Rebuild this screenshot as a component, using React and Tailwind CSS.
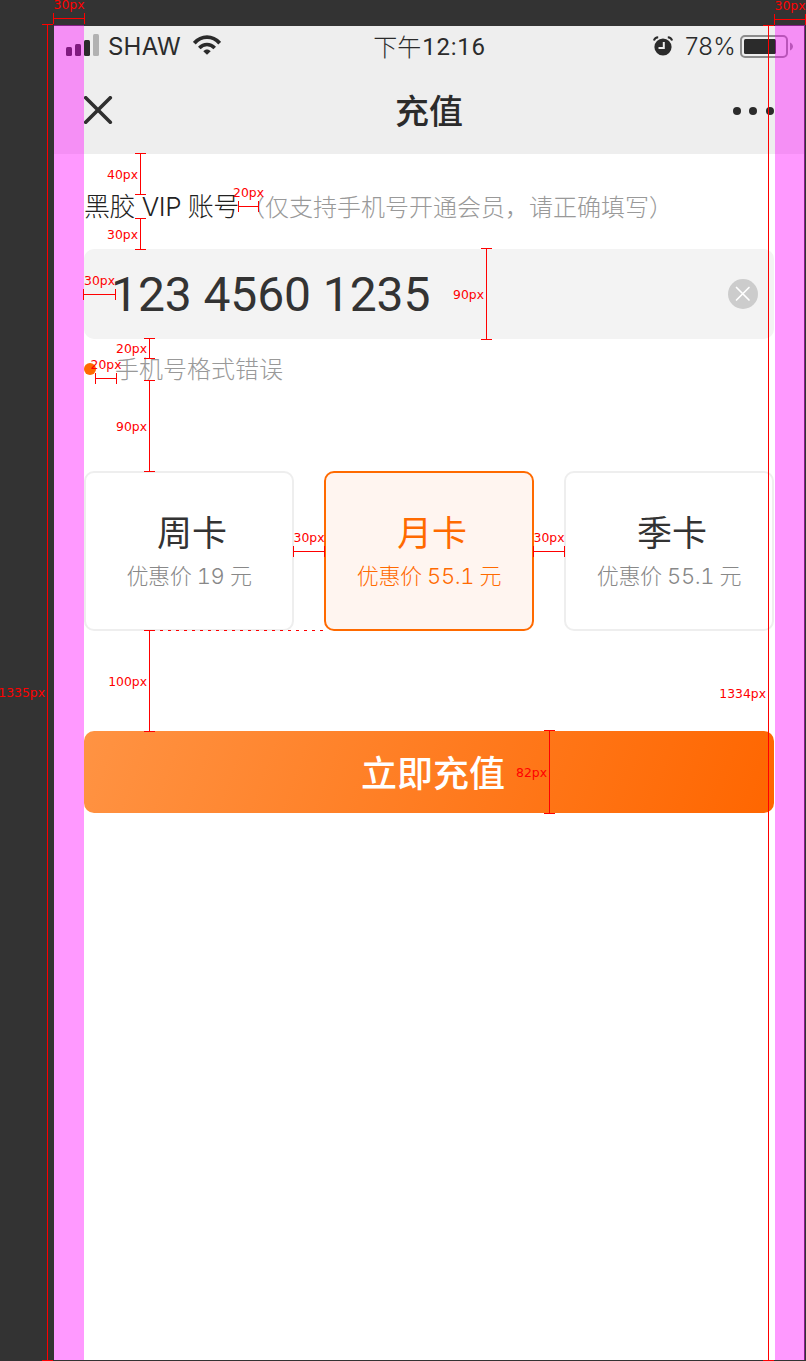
const CJK = "font-['Noto_Sans_CJK_SC',sans-serif]";
const MIXED = "font-['Inter','Noto_Sans_CJK_SC',sans-serif]";

const plans = [
  { name: '周卡', price: '优惠价 19 元' },
  { name: '月卡', price: '优惠价 55.1 元', selected: true },
  { name: '季卡', price: '优惠价 55.1 元' },
];

// Vertical measures run from y1 to y2 at x; horizontal ones from x1 to x2 at y.
const verticals = [
  { x: 47, y1: 24, y2: 1360, label: '1335px' },
  { x: 768, y1: 25, y2: 1360, label: '1334px' },
  { x: 140, y1: 153, y2: 194, label: '40px' },
  { x: 140, y1: 218, y2: 249, label: '30px' },
  { x: 149, y1: 338, y2: 358, label: '20px' },
  { x: 149, y1: 380, y2: 471, label: '90px' },
  { x: 486, y1: 248, y2: 339, label: '90px' },
  { x: 149, y1: 630, y2: 731, label: '100px' },
  { x: 549, y1: 730, y2: 813, label: '82px' },
];

const horizontals = [
  { y: 18, x1: 53, x2: 84, label: '30px' },
  { y: 19, x1: 774, x2: 805, label: '30px' },
  { y: 206, x1: 238, x2: 258, label: '20px' },
  { y: 294, x1: 83, x2: 115, label: '30px' },
  { y: 378, x1: 95, x2: 116, label: '20px' },
  { y: 551, x1: 293, x2: 324, label: '30px' },
  { y: 551, x1: 533, x2: 564, label: '30px' },
];

const LABEL =
  "absolute whitespace-nowrap font-['DejaVu_Sans',sans-serif] text-[12.4px] leading-[14px] text-[#ff0000]";

function VerticalMeasure({ x, y1, y2, label }) {
  return (
    <div
      className="absolute flex w-[11px] flex-col items-center border-y border-[#ff0000]"
      style={{ left: x - 5, top: y1, height: y2 - y1 + 1 }}
    >
      <div className="w-px flex-1 bg-[#ff0000]" />
      <span className={`${LABEL} right-[8px] top-1/2 mt-[0.5px] -translate-y-1/2`}>{label}</span>
    </div>
  );
}

function HorizontalMeasure({ y, x1, x2, label }) {
  return (
    <div
      className="absolute flex h-[11px] items-center border-x border-[#ff0000]"
      style={{ left: x1, top: y - 5, width: x2 - x1 + 1 }}
    >
      <div className="h-px flex-1 bg-[#ff0000]" />
      <span className={`${LABEL} bottom-[12px] left-1/2 -translate-x-1/2`}>{label}</span>
    </div>
  );
}

function StatusBar() {
  return (
    <div className="flex h-10 items-center justify-between pl-3 pr-[10px] text-[#2b2b2b]">
      <div className="flex w-[200px] items-center">
        <svg width="33" height="22" viewBox="0 0 33 22" className="-mt-[2px]">
          <rect x="0" y="13" width="6" height="9" rx="1.5" fill="#2b2b2b" />
          <rect x="9" y="10" width="6" height="12" rx="1.5" fill="#2b2b2b" />
          <rect x="18" y="6" width="6" height="16" rx="1.5" fill="#2b2b2b" />
          <rect x="27" y="0" width="6" height="22" rx="1.5" fill="#b2b2b2" />
        </svg>
        <span className="ml-[9px] mt-[2px] w-[76px] font-['Inter',sans-serif] text-[24px] leading-[38px] tracking-[0.2px]">
          SHAW
        </span>
        <svg width="28" height="20" viewBox="0 0 28 20" className="ml-[9px] -mt-[2px]" fill="none">
          <path d="M1.3 8.2 C8.5 0.2 19.5 0.2 26.7 8.2" stroke="#2b2b2b" strokeWidth="3.8" />
          <path d="M6.3 13 C10.8 8.4 17.2 8.4 21.7 13" stroke="#2b2b2b" strokeWidth="3.6" />
          <path d="M10.3 16.2 C12.5 14 15.5 14 17.7 16.2 L14 19.8 Z" fill="#2b2b2b" />
        </svg>
      </div>
      <div className="flex items-center text-[24px] leading-[38px]">
        <span className={`${CJK} -ml-px font-light`}>下午</span>
        <span className="ml-px mt-[2px] font-['Roboto',sans-serif] tracking-[0.7px]">12:16</span>
      </div>
      <div className="flex w-[200px] items-center justify-end">
        <svg width="20" height="20" viewBox="0 0 20 20" className="-mt-px">
          <circle cx="10" cy="11" r="8.6" fill="#2b2b2b" />
          <path d="M0.9 4.5 C1.5 2.5 3 1.3 5.2 1.2" stroke="#2b2b2b" strokeWidth="2" fill="none" />
          <path d="M14.8 1.2 C17 1.3 18.5 2.5 19.1 4.5" stroke="#2b2b2b" strokeWidth="2" fill="none" />
          <path d="M10.8 6 V12 H5.5" stroke="#eeeeee" strokeWidth="2" fill="none" />
        </svg>
        <span className="ml-[12px] mt-[2px] w-[55px] whitespace-nowrap font-['Inter',sans-serif] text-[24px] font-light leading-[38px] tracking-[0.3px]">
          78%
        </span>
        <svg width="54" height="24" viewBox="0 0 54 24" className="mt-px">
          <rect x="1" y="1" width="46" height="21" rx="4" fill="none" stroke="#8c8c8c" strokeWidth="2" />
          <rect x="4" y="4" width="32" height="15" rx="1.5" fill="#2b2b2b" />
          <path d="M50 7.5 C54 9.5 54 13.5 50 15.5 Z" fill="#8c8c8c" />
        </svg>
      </div>
    </div>
  );
}

function NavBar() {
  return (
    <div className="flex h-22 items-center justify-between px-[30px]">
      <svg width="42" height="28" viewBox="0 0 42 28" fill="none">
        <path d="M1.7 1.7 L26.3 26.3 M26.3 1.7 L1.7 26.3" stroke="#2f2f2f" strokeWidth="3.6" strokeLinecap="round" />
      </svg>
      <h1 className={`${CJK} text-[34px] font-medium leading-[48px] text-[#2b2b2b]`}>充值</h1>
      <svg width="42" height="8" viewBox="0 0 42 8" className="mt-[2px]" fill="#2b2b2b">
        <circle cx="5" cy="4" r="4" />
        <circle cx="21" cy="4" r="4" />
        <circle cx="38" cy="4" r="4" />
      </svg>
    </div>
  );
}

function PlanCard({ name, price, selected }) {
  return (
    <button
      className={`flex h-40 w-[210px] flex-col items-center rounded-[10px] border-2 pt-[33px] ${
        selected ? 'border-[#ff6a00] bg-[#fff5f0] text-[#ff6a00]' : 'border-[#eeeeee] bg-white text-[#333333]'
      }`}
    >
      <span className={`${CJK} pl-[6px] text-[35px] leading-[50px]`}>{name}</span>
      <span
        className={`${MIXED} mt-[5px] whitespace-nowrap text-[22px] font-light tabular-nums leading-[30px] tracking-[-0.4px] ${
          selected ? '' : 'text-[#888888]'
        }`}
      >
        {price}
      </span>
    </button>
  );
}

export default function App() {
  return (
    <div className="relative h-[1361px] w-[806px] overflow-hidden bg-[#333333] pl-[54px] pt-[26px]">
      <main className="h-[1334px] w-[750px] bg-white">
        <header className="bg-[#eeeeee]">
          <StatusBar />
          <NavBar />
        </header>
        <section className="px-[30px] pt-[33px]">
          <div className="flex h-[37px] items-center whitespace-nowrap">
            <span className={`${MIXED} mt-px w-[157px] text-[26px] font-light leading-[37px] tracking-[-0.5px] text-[#222222]`}>
              黑胶 VIP 账号
            </span>
            <span className={`${CJK} text-[24px] font-light leading-[37px] text-[#999999]`}>
              （仅支持手机号开通会员，请正确填写）
            </span>
          </div>
          <div className="mt-[25px] flex h-[90px] items-center justify-between rounded-[10px] bg-[#f3f3f3] pl-[27px] pr-4">
            <span className="pt-[2px] font-['Roboto',sans-serif] text-[48px] leading-[88px] tracking-[-0.1px] text-[#333333]">
              123 4560 1235
            </span>
            <svg width="30" height="30" viewBox="0 0 30 30">
              <circle cx="15" cy="15" r="15" fill="#cccccc" />
              <path d="M8.5 8.5 L21 21 M21 8.5 L8.5 21" stroke="#ffffff" strokeWidth="1.7" strokeLinecap="round" />
            </svg>
          </div>
          <div className="mt-[13px] flex h-[34px] items-center">
            <span className="h-3 w-3 rounded-full bg-[#ff6a00]" />
            <span className={`${CJK} -mt-[2px] ml-[19px] text-[24px] font-light leading-[34px] text-[#999999]`}>
              手机号格式错误
            </span>
          </div>
          <div className="mt-[85px] flex justify-between">
            {plans.map((plan) => (
              <PlanCard key={plan.name} {...plan} />
            ))}
          </div>
          <button
            className={`${CJK} mt-[100px] flex h-[82px] w-full items-center justify-center rounded-[10px] bg-[linear-gradient(110deg,#ff9343_0%,#ff6600_100%)] pb-[3px] pl-[8px] text-[36px] font-medium text-white`}
          >
            立即充值
          </button>
        </section>
      </main>

      <div className="absolute left-[54px] top-[25px] h-[1335px] w-[30px] bg-[#ff00ff]/40" />
      <div className="absolute left-[775px] top-[25px] h-[1335px] w-[30px] bg-[#ff00ff]/40" />
      <div className="absolute left-[152px] top-[630px] h-px w-[172px] bg-[repeating-linear-gradient(90deg,#ff0000_0px,#ff0000_3px,transparent_3px,transparent_8px)]" />
      {verticals.map((m) => (
        <VerticalMeasure key={`v${m.x}-${m.y1}`} {...m} />
      ))}
      {horizontals.map((m) => (
        <HorizontalMeasure key={`h${m.x1}-${m.y}`} {...m} />
      ))}
    </div>
  );
}
